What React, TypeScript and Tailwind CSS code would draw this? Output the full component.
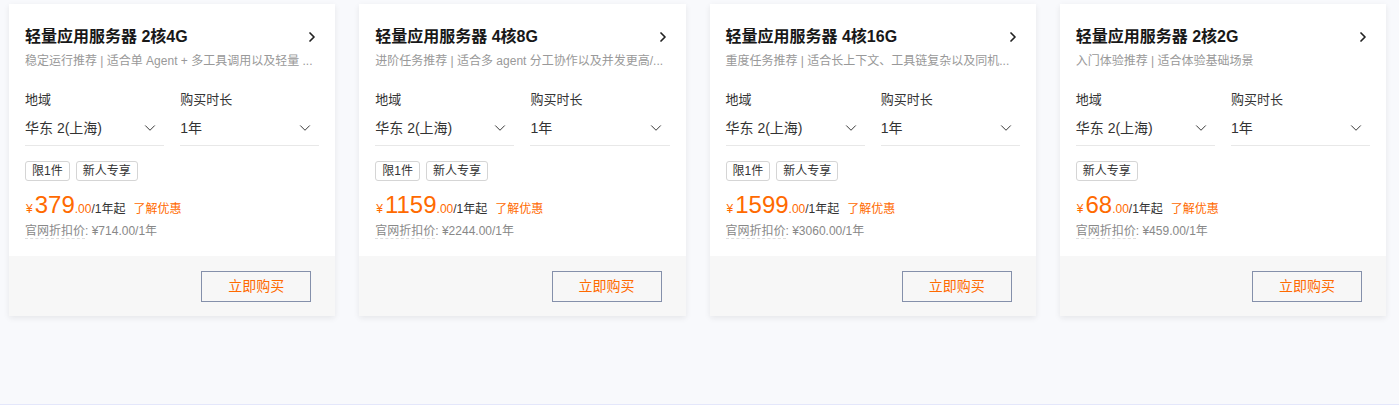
import { ChevronRight, ChevronDown } from "lucide-react";

type Plan = {
  title: string;
  desc: string;
  tags: string[];
  price: string;
  original: string;
};

const plans: Plan[] = [
  {
    title: "轻量应用服务器 2核4G",
    desc: "稳定运行推荐 | 适合单 Agent + 多工具调用以及轻量 ...",
    tags: ["限1件", "新人专享"],
    price: "379",
    original: "¥714.00/1年",
  },
  {
    title: "轻量应用服务器 4核8G",
    desc: "进阶任务推荐 | 适合多 agent 分工协作以及并发更高/...",
    tags: ["限1件", "新人专享"],
    price: "1159",
    original: "¥2244.00/1年",
  },
  {
    title: "轻量应用服务器 4核16G",
    desc: "重度任务推荐 | 适合长上下文、工具链复杂以及同机...",
    tags: ["限1件", "新人专享"],
    price: "1599",
    original: "¥3060.00/1年",
  },
  {
    title: "轻量应用服务器 2核2G",
    desc: "入门体验推荐 | 适合体验基础场景",
    tags: ["新人专享"],
    price: "68",
    original: "¥459.00/1年",
  },
];

function Field({ label, value }: { label: string; value: string }) {
  return (
    <div className="flex flex-col">
      <div className="text-[13px] leading-[18px] text-[#333]">{label}</div>
      <div className="mt-[2px] flex h-[35px] items-center justify-between border-b border-[#e8e8e8] text-[14px] text-[#333]">
        <span>{value}</span>
        <ChevronDown className="mr-[5px] h-[18px] w-[18px] text-[#333]" strokeWidth={1.3} />
      </div>
    </div>
  );
}

function PlanCard({ plan }: { plan: Plan }) {
  return (
    <div className="flex flex-col bg-white shadow-[0_2px_6px_rgba(0,0,0,0.08)]">
      <div className="px-4 pt-5">
        <div className="flex items-center justify-between">
          <div className="text-[16px] font-bold leading-[26px] text-[#181818]">{plan.title}</div>
          <ChevronRight className="-mr-[1px] h-[16px] w-[16px] text-[#222]" strokeWidth={2.6} />
        </div>
        <div className="mt-[2px] whitespace-nowrap text-[12px] leading-[18px] text-[#999]">{plan.desc}</div>

        <div className="mt-[21px] grid grid-cols-2 gap-4">
          <Field label="地域" value="华东 2(上海)" />
          <Field label="购买时长" value="1年" />
        </div>

        <div className="mt-[15px] flex gap-[6px]">
          {plan.tags.map((t) => (
            <span
              key={t}
              className="flex h-[20px] items-center rounded-[3px] border border-[#d5d5d5] px-[6px] text-[12px] text-[#333]"
            >
              {t}
            </span>
          ))}
        </div>

        <div className="mt-[10px] flex h-[28px] items-baseline">
          <span className="ml-[1px] mr-[2px] text-[12px] text-[#ff6a00]">¥</span>
          <span className="text-[24px] leading-[28px] text-[#ff6a00]">{plan.price}</span>
          <span className="text-[12px] text-[#ff6a00]">.00</span>
          <span className="text-[12px] text-[#333]">/1年起</span>
          <span className="ml-[8px] text-[12px] text-[#ff6a00]">了解优惠</span>
        </div>

        <div className="mt-[3px] text-[12px] leading-[18px] text-[#888]">
          <span className="border-b border-dashed border-[#ddd]">官网折扣价</span>: {plan.original}
        </div>
      </div>

      <div className="mt-4 flex h-[60px] items-center justify-end bg-[#f7f7f7] pr-6">
        <button
          type="button"
          className="h-[31px] w-[110px] border border-[#8590ab] bg-transparent text-[14px] text-[#ff6a00]"
        >
          立即购买
        </button>
      </div>
    </div>
  );
}

export default function App() {
  return (
    <div className="h-[405px] w-full border-b border-[#e4e7fb] bg-[#f8f9fc] font-['Liberation_Sans','Noto_Sans_CJK_SC',sans-serif]">
      <div className="grid grid-cols-4 gap-6 pl-[9px] pr-[13px] pt-[4px]">
        {plans.map((p) => (
          <PlanCard key={p.title} plan={p} />
        ))}
      </div>
    </div>
  );
}
